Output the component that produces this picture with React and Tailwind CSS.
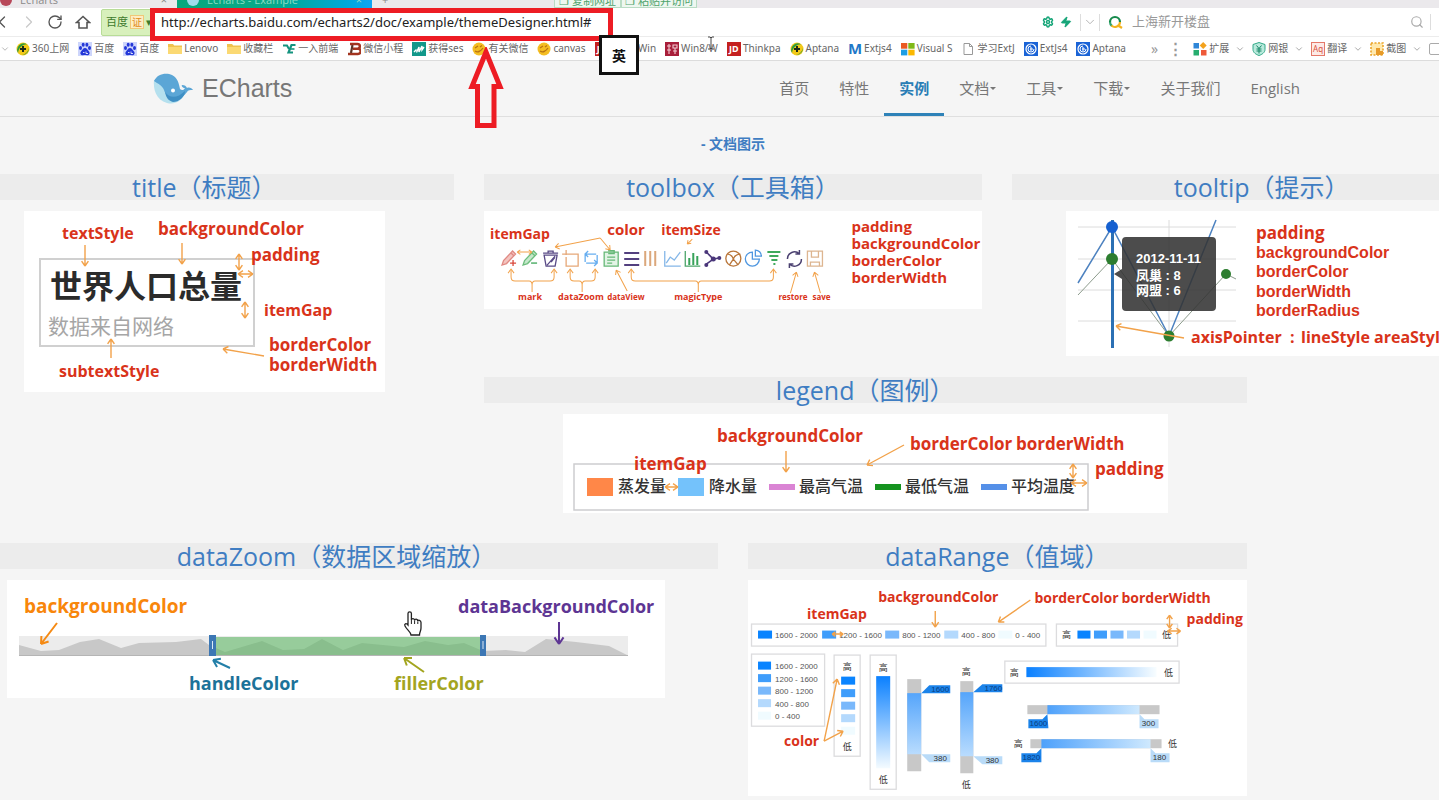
import { RotateCw, ChevronLeft, ChevronRight, ChevronDown, Search, Zap, Settings } from "lucide-react";

const RED = "#d9331a";
const ORANGE = "#f2a24a";
const SANS = "'Open Sans','Noto Sans CJK SC',sans-serif";
const ARIAL = "'Liberation Sans','Noto Sans CJK SC',sans-serif";

/* ---------- browser chrome ---------- */

function PlusDisc() {
  return (
    <svg viewBox="0 0 14 14" className="size-3.5 shrink-0">
      <circle cx="7" cy="7" r="6.5" fill="#f3c918" />
      <path d="M2 11a6.500 6.500 0 0 1 9-8.700C7 2.500 3 5 2 11z" fill="#2f9a3c" />
      <path d="M13 6c0 4-3 7-7 7 4-1 6-3.500 7-7z" fill="#2f9a3c" />
      <path d="M7 4v6M4 7h6" stroke="#1c2a17" strokeWidth="2" />
    </svg>
  );
}

function Paw() {
  return (
    <svg viewBox="0 0 14 14" className="size-3.5 shrink-0">
      <rect width="14" height="14" fill="#cdd5fb" />
      <g fill="#2438d8">
        <ellipse cx="2.500" cy="6" rx="1.500" ry="2" />
        <ellipse cx="5.200" cy="2.800" rx="1.500" ry="2" />
        <ellipse cx="8.900" cy="2.800" rx="1.500" ry="2" />
        <ellipse cx="11.500" cy="6" rx="1.500" ry="2" />
        <path d="M7 6c2 0 2.500 2 4 3.500 1.500 2 0 4-2 3.700-1.500-.3-2.500-.3-4 0-2 .3-3.500-1.700-2-3.700C4.500 8 5 6 7 6z" />
      </g>
      <path d="M5 10.500h1.500M8 9.500v2h2" stroke="#fff" strokeWidth=".8" fill="none" />
    </svg>
  );
}

function Folder() {
  return (
    <svg viewBox="0 0 14 14" className="size-3.5 shrink-0">
      <path d="M0 2h5l1.200 1.500H14V12H0z" fill="#f0c24e" />
      <path d="M0 5h14v7H0z" fill="#fbd973" />
    </svg>
  );
}

function Branch() {
  return (
    <svg viewBox="0 0 14 14" className="size-3.5 shrink-0">
      <path d="M1 3.500h4l2 3.500" stroke="#14937f" strokeWidth="2" fill="none" />
      <path d="M13.500 3H9.500L6.500 10.500H11" stroke="#14937f" strokeWidth="2.200" fill="none" />
      <path d="M8.500 7h4" stroke="#14937f" strokeWidth="1.600" />
    </svg>
  );
}

function Bee() {
  return (
    <svg viewBox="0 0 14 14" className="size-3.5 shrink-0">
      <path d="M3 2h7.500a2 2 0 0 1 0 4.700H6h5a2.500 2.500 0 0 1 0 5.300H1" stroke="#a3341f" strokeWidth="2.400" fill="none" />
      <path d="M5.500 3L4 11" stroke="#5d3526" strokeWidth="2.200" />
    </svg>
  );
}

function Wave() {
  return (
    <svg viewBox="0 0 14 14" className="size-3.5 shrink-0">
      <rect width="14" height="14" fill="#12988a" />
      <path d="M2 10l2.500-2.500M4.500 10.500L7 5v5l3-6v4l2-3" stroke="#fff" strokeWidth="1.400" fill="none" />
    </svg>
  );
}

function Coin() {
  return (
    <svg viewBox="0 0 14 14" className="size-3.5 shrink-0">
      <circle cx="7" cy="7" r="6.500" fill="#f4bd22" />
      <path d="M3 6l3-2M8 5l2-1.500M3 9c3 2 6 0 8-3" stroke="#b97412" strokeWidth="1.300" fill="none" />
    </svg>
  );
}

function Stamp() {
  return (
    <svg viewBox="0 0 14 14" className="size-3.5 shrink-0">
      <rect width="14" height="14" fill="#a81e3a" />
      <path d="M2 4h4M4 2v10M2 8h4M8 3h4v3H8zM8 9h4M10 6v6" stroke="#f2ccd2" strokeWidth="1.100" fill="none" />
    </svg>
  );
}

function Jd() {
  return (
    <span className="flex size-3.5 shrink-0 items-center justify-center bg-[#c4201f] text-[9px] font-bold text-white">JD</span>
  );
}

function Letter() {
  return <span className="flex size-3.5 shrink-0 items-center justify-center text-[15px] font-bold text-[#1f78c8]">M</span>;
}

function Windows() {
  return (
    <svg viewBox="0 0 14 14" className="size-3.5 shrink-0">
      <path d="M0 1h6.300v5.700H0z" fill="#ea5a23" />
      <path d="M7.300 1h6.300v5.700H7.300z" fill="#7fb916" />
      <path d="M0 7.700h6.300v5.700H0z" fill="#1c9ee4" />
      <path d="M7.300 7.700h6.300v5.700H7.300z" fill="#fbb800" />
    </svg>
  );
}

function Page() {
  return (
    <svg viewBox="0 0 14 14" className="size-3.5 shrink-0">
      <path d="M3 1.500h5.500L11.500 4.500V12.500H3zM8.500 1.500v3h3" stroke="#999" fill="none" />
    </svg>
  );
}

function Swirl() {
  return (
    <svg viewBox="0 0 14 14" className="size-3.5 shrink-0">
      <rect width="14" height="14" fill="#1a63d6" />
      <circle cx="7" cy="7" r="5" stroke="#fff" strokeWidth="1.200" fill="none" />
      <path d="M7 4a3 3 0 1 0 3 3M7 5v4M6 7h3" stroke="#fff" fill="none" />
    </svg>
  );
}

function Blocks() {
  return (
    <svg viewBox="0 0 14 14" className="size-3.5 shrink-0">
      <path d="M.5 1h5.500v5.500H.5z" fill="#2f86d8" />
      <path d="M10.200 0l3.500 3.500-3.500 3.500-3.500-3.500z" fill="#f3a21d" />
      <path d="M.5 8h5.500v5.500H.5z" fill="#27ad6f" />
      <path d="M8 8h5.500v5.500H8z" fill="#ee5a3a" />
    </svg>
  );
}

function Shield() {
  return (
    <svg viewBox="0 0 14 14" className="size-3.5 shrink-0">
      <path d="M7 .5l6 2v5c0 3-3 5-6 6-3-1-6-3-6-6v-5z" fill="#b9eadc" stroke="#31a888" />
      <path d="M4.500 3.500L7 6.500l2.500-3M4.500 7h5M4.500 9h5M7 6.500v5" stroke="#148465" fill="none" />
    </svg>
  );
}

function Dictionary() {
  return (
    <span className="flex size-3.5 shrink-0 items-center justify-center border border-[#e4796a] bg-[#fdeae6] text-[8px] text-[#d9513e]">Aq</span>
  );
}

function Snip() {
  return (
    <svg viewBox="0 0 14 14" className="size-3.5 shrink-0">
      <rect x="1" y="1" width="12" height="12" fill="#ffe9ae" stroke="#eba52c" strokeWidth="1.600" strokeDasharray="2 1.500" />
      <path d="M6 6h4v3h3v4H6z" fill="#e79a28" />
    </svg>
  );
}

function Home() {
  return (
    <svg viewBox="0 0 16 16" className="size-4" aria-hidden="true">
      <path d="M1.500 8.500L8 2.500l6.500 6H12V14H4V8.500z" stroke="currentColor" strokeWidth="1.600" fill="none" />
    </svg>
  );
}

const bookmarks = [
  [PlusDisc, "360上网"],
  [Paw, "百度"],
  [Paw, "百度"],
  [Folder, "Lenovo"],
  [Folder, "收藏栏"],
  [Branch, "一入前端"],
  [Bee, "微信小程"],
  [Wave, "获得ses"],
  [Coin, "有关微信"],
  [Coin, "canvas"],
  [Jd, "Win8/Win"],
  [Stamp, "Win8/W"],
  [Jd, "Thinkpa"],
  [PlusDisc, "Aptana"],
  [Letter, "Extjs4"],
  [Windows, "Visual S"],
  [Page, "学习ExtJ"],
  [Swirl, "ExtJs4"],
  [Swirl, "Aptana"],
];

const extensions = [
  [Blocks, "扩展"],
  [Shield, "网银"],
  [Dictionary, "翻译"],
  [Snip, "截图"],
];

function TabStrip() {
  return (
    <div className="flex h-2 items-end overflow-hidden bg-[#ebe9ec] text-[11px] leading-3 text-[#8a8a8a]">
      <div className="flex w-[177px] shrink-0 items-center gap-2 pr-2.5 pb-0.5">
        <span className="size-3 rounded-full bg-[#b8485a]" />
        <span className="flex-1">Echarts</span>
        <span>×</span>
      </div>
      <div className="flex w-[195px] shrink-0 items-center gap-2 bg-linear-to-r from-[#08a77c] via-[#08a98a] to-[#0fa5f5] px-2.5 pb-0.5 text-[#8fdcc4]">
        <span className="size-3 rounded-full bg-[#9fdcec]" />
        <span className="flex-1">Echarts - Example</span>
        <span>×</span>
      </div>
      <div className="w-[182px] shrink-0 pb-0.5 pl-2.5">+</div>
      <button className="flex w-[67px] items-center justify-center border border-[#b9dcc4] bg-[#eef7f0] text-[#4fa36c]">❐ 复制网址</button>
      <button className="flex w-[76px] items-center justify-center border border-[#b9dcc4] bg-[#eef7f0] text-[#4fa36c]">❐ 粘贴并访问</button>
    </div>
  );
}

function AddressBar() {
  return (
    <div className="flex h-[29px] items-center border-b border-[#ececec] bg-white text-[#555]">
      <button aria-label="Back" className="-ml-2"><ChevronLeft className="size-5" strokeWidth={1.5} /></button>
      <button aria-label="Forward" className="ml-[7px] text-[#c9c9c9]"><ChevronRight className="size-5" strokeWidth={1.5} /></button>
      <button aria-label="Reload" className="ml-2"><RotateCw className="size-4" /></button>
      <button aria-label="Home" className="ml-3"><Home /></button>
      <button className="ml-2.5 flex h-[27px] w-[52px] items-center gap-0.5 rounded-xs border border-[#b8dc98] bg-[#d8f0bc] pl-1 text-[11px] whitespace-nowrap text-[#3f7a2c]">
        百度<span className="border border-[#f0c878] bg-[#fdedc4] px-px text-[10px] leading-3 text-[#e08a20]">证</span>▾
      </button>
      <input
        aria-label="Address"
        defaultValue="http://echarts.baidu.com/echarts2/doc/example/themeDesigner.html#"
        className="ml-2 h-6 min-w-0 flex-1 bg-white font-['Noto_Sans',sans-serif] text-[13px] text-[#222] outline-none"
      />
      <div className="flex items-center gap-1.5 text-[#16a578]">
        <Settings className="size-3" strokeWidth={3} />
        <Zap className="size-3" fill="currentColor" />
      </div>
      <button aria-label="Address list" className="mx-2 flex h-[17px] items-center border-x border-[#ddd] px-0.5 text-[#aaa]">
        <ChevronDown className="size-3.5" strokeWidth={1.5} />
      </button>
      <svg viewBox="0 0 16 14" className="h-3.5 w-4" aria-hidden="true">
        <path d="M2 7a5 5 0 0 1 10 0" stroke="#168a4c" strokeWidth="2.200" fill="none" />
        <path d="M2 7a5 5 0 0 0 2 4" stroke="#2fa36a" strokeWidth="2.200" fill="none" />
        <path d="M3.500 10.500A5 5 0 0 0 12 7M11 11l3 2" stroke="#f3b31f" strokeWidth="2.200" fill="none" />
      </svg>
      <input aria-label="Search" placeholder="上海新开楼盘" className="ml-2 w-[278px] text-[13px] outline-none placeholder:text-[#999]" />
      <button aria-label="Search the web" className="mr-1.5 text-[#aaa]"><Search className="size-3.5" /></button>
      <span className="mr-2 h-4 border-l border-[#ddd]" />
    </div>
  );
}

function BookmarkBar() {
  return (
    <nav aria-label="Bookmarks" className="flex h-6 items-center overflow-hidden border-b border-[#dcdcdc] bg-white font-['Noto_Sans','Noto_Sans_CJK_SC',sans-serif] text-[10px] whitespace-nowrap text-[#666]">
      <ChevronDown className="size-2.5 shrink-0 text-[#aaa]" />
      <ul className="ml-1.5 flex gap-[9px]">
        {bookmarks.map(([Icon, label], i) => (
          <li key={i}>
            <a href="#" className="flex items-center gap-0.5">
              <Icon />
              {label}
            </a>
          </li>
        ))}
      </ul>
      <div className="ml-auto flex w-[288px] shrink-0 items-center gap-2.5">
        <button aria-label="More bookmarks" className="text-[14px] text-[#999]">»</button>
        <span className="text-[15px] font-bold text-[#999]">⋮</span>
        <div className="flex items-center gap-[7px]">
          {extensions.map(([Icon, label]) => (
            <button key={label} className="flex items-center gap-0.5">
              <Icon />
              {label}
              <ChevronDown className="ml-1 size-2.5 text-[#999]" />
            </button>
          ))}
          <span className="size-3 shrink-0 rounded-xs border border-[#aaa]" />
        </div>
      </div>
    </nav>
  );
}

/* ---------- site header ---------- */

function Whale() {
  return (
    <svg viewBox="0 0 42 32" className="h-8 w-[42px]" aria-hidden="true">
      <path d="M1 7c-1 9 2 20 13 23 8 2 14-2 18-9z" fill="#b5e0ee" />
      <path d="M1 8C4 1 13-1 19 2c6 3 7 9 8 14 2 2 4 1 5-1-2 0-4-2-3-3 3 0 4 1 5 3 2-1 5 0 6 2-3 0-5 0-6 2-3 4-7 7-12 6-6 0-10-4-11-8-2-5-6-6-10-9z" fill="#5ba6d6" />
      <path d="M12 19c4 6 12 7 20-1 0 6-6 11-12 11-4-1-7-4-8-10z" fill="#3f8fc4" />
      <circle cx="20" cy="17.500" r="2" fill="#fff" />
    </svg>
  );
}

const navItems = [
  { label: "首页" },
  { label: "特性" },
  { label: "实例", active: true },
  { label: "文档", menu: true },
  { label: "工具", menu: true },
  { label: "下载", menu: true },
  { label: "关于我们" },
  { label: "English" },
];

function SiteHeader() {
  return (
    <header className="flex h-14 items-stretch justify-between border-b border-[#dfdfdf] pr-[124px] pl-[153px]">
      <a href="#" className="flex items-center gap-[7px] text-[25px] text-[#777]" style={{ fontFamily: ARIAL }}>
        <Whale />
        ECharts
      </a>
      <nav aria-label="Main" className="flex text-[15px] text-[#777]">
        {navItems.map(({ label, active, menu }) => (
          <a
            key={label}
            href="#"
            className={
              active
                ? "flex items-center border-b-3 border-[#2e82b8] px-[15px] pt-[3px] font-bold text-[#2a7db5]"
                : "flex items-center gap-px px-[15px]"
            }
          >
            {label}
            {menu && <span className="border-x-3 border-t-3 border-x-transparent border-t-[#777]" />}
          </a>
        ))}
      </nav>
    </header>
  );
}

/* ---------- diagram helpers ---------- */

function Arrow({ from, to, both = false, color = ORANGE, width = 1.4, head = 6 }) {
  const [x1, y1] = from;
  const [x2, y2] = to;
  const tip = (x, y, angle) =>
    [0.6, -0.6].map((s) => `M${x} ${y}L${x - head * Math.cos(angle + s)} ${y - head * Math.sin(angle + s)}`).join("");
  const a = Math.atan2(y2 - y1, x2 - x1);
  const d = `M${x1} ${y1}L${x2} ${y2}${tip(x2, y2, a)}${both ? tip(x1, y1, a + Math.PI) : ""}`;
  return <path d={d} stroke={color} strokeWidth={width} fill="none" />;
}

function Note({ x, y, size = 17, color = RED, children }) {
  return (
    <text x={x} y={y} fontSize={size} fill={color} fontWeight="700">
      {children}
    </text>
  );
}

function Section({ heading, className, children }) {
  return (
    <section className={className}>
      <h2 className="bg-[#ececec] text-center text-[25px] leading-[26px] text-[#3f7dc2]">{heading}</h2>
      <div className="mt-[11px] flex justify-center">{children}</div>
    </section>
  );
}

/* ---------- diagrams ---------- */

function TitleDiagram() {
  return (
    <svg viewBox="24 211 361 181" className="w-[361px] bg-white" fontFamily={SANS} role="img" aria-label="title">
      <rect x="40" y="259" width="214" height="87" fill="none" stroke="#d0d0d0" strokeWidth="2" />
      <text x="50" y="298" fontSize="32" fontWeight="700" fill="#2b2b2b">世界人口总量</text>
      <text x="48" y="334" fontSize="21" fill="#a6a6a6">数据来自网络</text>
      <Arrow from={[85, 245]} to={[85, 266]} />
      <Arrow from={[182, 243]} to={[182, 264]} />
      <Arrow from={[239, 254]} to={[239, 270]} both />
      <Arrow from={[238, 274]} to={[253, 274]} both />
      <Arrow from={[245, 302]} to={[245, 318]} both />
      <Arrow from={[111, 358]} to={[111, 339]} />
      <Arrow from={[264, 356]} to={[223, 349]} />
      <Note x={62} y={239} size={16}>textStyle</Note>
      <Note x={158} y={235}>backgroundColor</Note>
      <Note x={251} y={261}>padding</Note>
      <Note x={264} y={316} size={16}>itemGap</Note>
      <Note x={269} y={351}>borderColor</Note>
      <Note x={269} y={371}>borderWidth</Note>
      <Note x={59} y={377} size={16}>subtextStyle</Note>
    </svg>
  );
}

function Bracket({ left, right, stem }) {
  return (
    <g fill="none" stroke={ORANGE} strokeWidth="1">
      <path d={`M${left} 270V277q0 4 4 4H${stem - 3}q3 0 3 4V292V285q0-4 3-4H${right - 4}q4 0 4-4V270`} />
      <path d={`M${left - 3} 273l3-4 3 4M${right - 3} 273l3-4 3 4`} />
    </g>
  );
}

function ToolboxDiagram() {
  return (
    <svg viewBox="484 211 498 98" className="w-full bg-white" fontFamily={SANS} role="img" aria-label="toolbox">
      <g fill="none" strokeWidth="1.300">
        <g stroke="#e08a84">
          <path d="M502 265l1.500-4.500 9-9.500 3 3-9 9.500zM511 253l3 3" fill="#f3c4bf" />
          <path d="M510 263h6M513 260v6" stroke="#d9483b" />
        </g>
        <g stroke="#6dbd7d">
          <path d="M523 265l1.500-4.500 9-9.500 3 3-9 9.500zM532 253l3 3" fill="#c5e8cb" />
          <path d="M531 263h6" stroke="#3ba556" />
        </g>
        <path d="M543 253h15M548 253v-2h5v2M544 255l2 11h9l2-11zM547 265l8-9M551 262l4-5" stroke="#594a86" />
        <path d="M568 254h10v12h-12v-9M562 254h6M566 250v5" stroke="#e6a878" />
        <path d="M585 262v-8h11M588 251l-3 3 3 3M597 255v8h-11M594 260l3 3-3 3" stroke="#67aef0" />
        <path d="M604 252h14v14h-14zM608 250.500h6v3h-6M607 257h8M607 260h8M607 263h5" stroke="#66b877" fill="#e3f4e6" />
        <path d="M624 253h15M624 259h15M624 265h15" stroke="#53407f" strokeWidth="2" />
        <path d="M645 251v15M650 251v15M655 251v15" stroke="#dba77b" strokeWidth="2" />
        <path d="M664.500 251v15h16M666 263l4-6 4 3 6-8" stroke="#85b7e8" />
        <path d="M685 251v15h15" stroke="#4ca56a" />
        <path d="M689 258v7M693 253v12M697 256v9" stroke="#38a35a" strokeWidth="2" />
        <path d="M706 252l7 7M713 259l-7 5M713 259l6-1" stroke="#4a367a" strokeWidth="1.600" />
        <g fill="#4a367a">
          <circle cx="706" cy="252" r="2" /><circle cx="706" cy="265" r="2" /><circle cx="713" cy="259" r="2.500" /><circle cx="719" cy="258" r="2" />
        </g>
        <circle cx="733" cy="258.500" r="7.500" stroke="#b9763a" />
        <path d="M727 254c3 0 5 2 6 5 1-3 3-5 7-5M733 259l-4 6M733 259l5 6" stroke="#b9763a" />
        <path d="M752 252a7 7 0 1 0 7 7h-7z" stroke="#4f97e0" />
        <path d="M755 250a6 6 0 0 1 6 6h-6z" stroke="#4f97e0" />
        <path d="M767 252h13M769 256h9M771 260h6M773 264h2" stroke="#3fa95c" strokeWidth="2" />
        <path d="M787 259a7 7 0 0 1 12-5M801 259a7 7 0 0 1-12 5M799 250v4h-4M789 268v-4h4" stroke="#4a4070" strokeWidth="1.500" />
        <path d="M807 251h15v15h-15zM811 251v6h7v-6M810 266v-4h9v4" stroke="#ddb590" />
      </g>
      <Arrow from={[517, 252]} to={[532, 252]} both width={1} head={4} />
      <Arrow from={[600, 238]} to={[555, 247]} width={1} head={5} />
      <Arrow from={[600, 238]} to={[610, 250]} width={1} head={5} />
      <Arrow from={[692, 239]} to={[687, 244]} width={1} head={4} />
      <Bracket left={511} right={554} stem={532} />
      <Bracket left={570} right={595} stem={582} />
      <Bracket left={631} right={773} stem={698} />
      <Arrow from={[627, 291]} to={[616, 270]} width={1} head={5} />
      <Arrow from={[790, 293]} to={[796, 272]} width={1} head={5} />
      <Arrow from={[820, 293]} to={[814, 272]} width={1} head={5} />
      <Note x={490} y={239} size={14}>itemGap</Note>
      <Note x={607} y={235} size={15}>color</Note>
      <Note x={661} y={235} size={14}>itemSize</Note>
      <Note x={518} y={300} size={9}>mark</Note>
      <Note x={558} y={300} size={9}>dataZoom</Note>
      <Note x={607} y={300} size={8}>dataView</Note>
      <Note x={674} y={300} size={9}>magicType</Note>
      <Note x={778} y={300} size={8}>restore</Note>
      <Note x={812} y={300} size={8}>save</Note>
      <Note x={851} y={232} size={15}>padding</Note>
      <Note x={851} y={249} size={15}>backgroundColor</Note>
      <Note x={851} y={266} size={15}>borderColor</Note>
      <Note x={851} y={283} size={15}>borderWidth</Note>
    </svg>
  );
}

function TooltipDiagram() {
  return (
    <svg viewBox="1066 211 392 145" className="w-[392px] bg-white" fontFamily={SANS} role="img" aria-label="tooltip">
      <path d="M1078 227h158M1078 259h158M1078 290h158M1078 321h158M1169 220v127" stroke="#dcdcdc" fill="none" />
      <path d="M1078 295L1112 259 1169 336 1226 274 1236 279" stroke="#8d9c8d" fill="none" />
      <path d="M1078 283L1112 227 1169 336 1216 220" stroke="#4d82c0" strokeWidth="1.500" fill="none" />
      <path d="M1112.500 220V348" stroke="#2b70b4" strokeWidth="3" />
      <circle cx="1112" cy="227" r="6" fill="#1560d0" />
      <g fill="#2c7d2f">
        <circle cx="1112" cy="259" r="6" />
        <circle cx="1169" cy="336" r="5.500" />
        <circle cx="1226" cy="274" r="5" />
      </g>
      <path d="M1126 237h86q4 0 4 4v66q0 4-4 4h-86q-4 0-4-4v-28l-8-5 8-5v-28q0-4 4-4z" fill="#333" fillOpacity=".88" />
      <g fontFamily={ARIAL} fontSize="13" fontWeight="700" fill="#fff">
        <text x="1136" y="263">2012-11-11</text>
        <text x="1136" y="280">凤巢 : 8</text>
        <text x="1136" y="295">网盟 : 6</text>
      </g>
      <Arrow from={[1184, 338]} to={[1116, 326]} />
      <Note x={1256} y={239}>padding</Note>
      <g fontFamily={ARIAL}>
        <Note x={1256} y={258} size={16}>backgroundColor</Note>
        <Note x={1256} y={277} size={16}>borderColor</Note>
        <Note x={1256} y={297} size={16}>borderWidth</Note>
        <Note x={1256} y={316} size={16}>borderRadius</Note>
      </g>
      <Note x={1191} y={343} size={16}>axisPointer</Note>
      <Note x={1290} y={343} size={16}>:</Note>
      <Note x={1301} y={343} size={16}>lineStyle</Note>
      <Note x={1374} y={343} size={16}>areaStyle</Note>
    </svg>
  );
}

function LegendDiagram() {
  return (
    <svg viewBox="563 414 605 99" className="w-[605px] bg-white" fontFamily={SANS} role="img" aria-label="legend">
      <rect x="574" y="464" width="514" height="46" fill="none" stroke="#cdcdcf" strokeWidth="1.500" />
      <rect x="587" y="478" width="26" height="18" fill="#ff8748" />
      <rect x="678" y="478" width="26" height="18" fill="#74c2fb" />
      <rect x="769" y="484" width="26" height="6" fill="#da84d4" />
      <rect x="875" y="484" width="26" height="6" fill="#15931f" />
      <rect x="981" y="484" width="26" height="6" fill="#5590e8" />
      <g fontSize="16" fill="#333" fontWeight="500">
        <text x="618" y="492">蒸发量</text>
        <text x="709" y="492">降水量</text>
        <text x="799" y="492">最高气温</text>
        <text x="905" y="492">最低气温</text>
        <text x="1011" y="492">平均温度</text>
      </g>
      <Arrow from={[786, 451]} to={[786, 472]} />
      <Arrow from={[904, 445]} to={[867, 465]} />
      <Arrow from={[1073, 464]} to={[1073, 478]} both />
      <Arrow from={[1071, 483]} to={[1087, 483]} both />
      <Arrow from={[665, 487]} to={[678, 487]} both />
      <Note x={717} y={442}>backgroundColor</Note>
      <Note x={910} y={450}>borderColor</Note>
      <Note x={1016} y={450}>borderWidth</Note>
      <Note x={634} y={470}>itemGap</Note>
      <Note x={1095} y={475}>padding</Note>
    </svg>
  );
}

const shadow =
  "20,645 42,651 60,650 81,642 100,639 122,648 140,643 177,642 202,639 210,645 226,652 263,641 284,650 305,649 323,639 344,650 363,643 405,647 426,641 449,645 465,643 484,651 507,650 526,652 547,639 577,642 610,646 628,655 20,655";

function DataZoomDiagram() {
  return (
    <svg viewBox="8 580 658 118" className="w-[658px] bg-white" fontFamily={SANS} role="img" aria-label="dataZoom">
      <rect x="20" y="636" width="609" height="20" fill="#ececec" />
      <polygon points={shadow} fill="#c8c8c8" />
      <path d="M20 655.500H629" stroke="#b5b5b5" />
      <rect x="217" y="637" width="264" height="18" fill="#5fb765" fillOpacity=".6" />
      <rect x="210" y="635" width="7" height="21" fill="#3c77b4" />
      <rect x="481" y="635" width="6" height="21" fill="#3c77b4" />
      <path d="M213.500 641v8M484 641v8" stroke="#dbe8f5" />
      <Arrow from={[58, 623]} to={[42, 644]} color="#f58a14" width={2} head={8} />
      <Arrow from={[231, 668]} to={[214, 660]} color="#237fa8" width={2} head={8} />
      <Arrow from={[425, 672]} to={[405, 658]} color="#a3a51f" width={2} head={8} />
      <Arrow from={[560, 622]} to={[560, 644]} color="#5d3593" width={2} head={8} />
      <Note x={25} y={613} size={19} color="#f8860b">backgroundColor</Note>
      <Note x={459} y={613} size={18} color="#5d3593">dataBackgroundColor</Note>
      <Note x={190} y={690} size={18} color="#1c7299">handleColor</Note>
      <Note x={395} y={690} size={18} color="#a3a51f">fillerColor</Note>
    </svg>
  );
}

const ranges = [
  { label: "1600 - 2000", color: "#0a84ff", x: 759 },
  { label: "1200 - 1600", color: "#3f9dfb", x: 823 },
  { label: "800 - 1200", color: "#79b8fb", x: 886 },
  { label: "400 - 800", color: "#b4d9fd", x: 945 },
  { label: "0 - 400", color: "#f0fbff", x: 999 },
];

function DataRangeDiagram() {
  return (
    <svg viewBox="749 580 498 216" className="w-full bg-white" fontFamily={SANS} role="img" aria-label="dataRange">
      <defs>
        <linearGradient id="fullDown" x2="0" y2="1"><stop stopColor="#0a80ff" /><stop offset="1" stopColor="#f4fbff" /></linearGradient>
        <linearGradient id="partDown" x2="0" y2="1"><stop stopColor="#55a5fb" /><stop offset="1" stopColor="#b9dcfe" /></linearGradient>
        <linearGradient id="fullAcross"><stop stopColor="#0a80ff" /><stop offset="1" stopColor="#f8fdff" /></linearGradient>
        <linearGradient id="partAcross"><stop stopColor="#4ea1fb" /><stop offset="1" stopColor="#cfe9fe" /></linearGradient>
      </defs>
      <g fill="none" stroke="#dcdcde" strokeWidth="1.300">
        <rect x="752.500" y="624" width="294" height="22" />
        <rect x="1057" y="624" width="121" height="22" />
        <rect x="752.500" y="654" width="73" height="72" />
        <rect x="835" y="655" width="26" height="101" />
        <rect x="871" y="655" width="26" height="134" />
        <rect x="1005.500" y="661" width="174" height="22" />
      </g>
      {ranges.map(({ label, color, x }, i) => (
        <g key={label} fill={color}>
          <rect x={x} y="630.500" width="14" height="8" />
          <rect x={1078 + i * 16.5} y="630.500" width="13" height="8" />
          <rect x="759" y={661.5 + i * 12.5} width="13" height="8" />
          <rect x="842" y={676.5 + i * 12.5} width="14" height="8" />
          <g fontFamily={ARIAL} fontSize="8" fill="#555">
            <text x={x + 17} y="638">{label}</text>
            <text x="776" y={669 + i * 12.5}>{label}</text>
          </g>
        </g>
      ))}
      <rect x="877" y="676" width="14" height="92" fill="url(#fullDown)" />
      <rect x="1027" y="667" width="130" height="10" fill="url(#fullAcross)" />
      <g fill="#c8c8c8">
        <rect x="908" y="679" width="14" height="92" />
        <rect x="961" y="681" width="13" height="92" />
        <rect x="1028" y="705" width="132" height="9" />
        <rect x="1031" y="739" width="131" height="9" />
      </g>
      <rect x="908" y="693" width="14" height="61" fill="url(#partDown)" />
      <rect x="961" y="692" width="13" height="64" fill="url(#partDown)" />
      <rect x="1048" y="705" width="92" height="9" fill="url(#partAcross)" />
      <rect x="1042" y="739" width="109" height="9" fill="url(#partAcross)" />
      <g fill="#1b83ea">
        <polygon points="922,693 930,685 951,685 951,693" />
        <polygon points="974,692 983,684 1003,684 1003,692" />
        <polygon points="1048,714 1049,728 1029,728 1029,719 1043,719" />
        <polygon points="1042,748 1042,762 1022,762 1022,753 1037,753" />
      </g>
      <g fill="#b9dbf8">
        <polygon points="922,754 951,754 951,762 930,762" />
        <polygon points="974,756 1003,756 1003,764 983,764" />
        <polygon points="1140,714 1145,719 1159,719 1159,728 1140,728" />
        <polygon points="1151,748 1156,753 1170,753 1170,762 1151,762" />
      </g>
      <g fontFamily={ARIAL} fontSize="8" textAnchor="middle" fill="#333">
        <g fill="#0b3f80">
          <text x="941" y="692">1600</text>
          <text x="994" y="691">1760</text>
          <text x="1039" y="726">1600</text>
          <text x="1032" y="760">1820</text>
        </g>
        <text x="941" y="761">380</text>
        <text x="993" y="763">380</text>
        <text x="1149" y="726">300</text>
        <text x="1160" y="760">180</text>
      </g>
      <g fontSize="9" textAnchor="middle" fill="#333">
        <text x="1067" y="638">高</text>
        <text x="1167" y="638">低</text>
        <text x="848" y="670">高</text>
        <text x="848" y="750">低</text>
        <text x="884" y="671">高</text>
        <text x="884" y="783">低</text>
        <text x="967" y="675">高</text>
        <text x="967" y="788">低</text>
        <text x="1015" y="676">高</text>
        <text x="1169" y="676">低</text>
        <text x="1019" y="747">高</text>
        <text x="1173" y="747">低</text>
      </g>
      <Arrow from={[936, 611]} to={[936, 627]} />
      <Arrow from={[1031, 600]} to={[999, 622]} />
      <Arrow from={[1170, 615]} to={[1170, 628]} both head={5} />
      <Arrow from={[1168, 631]} to={[1181, 631]} both head={5} />
      <Arrow from={[833, 634]} to={[844, 634]} both head={4} />
      <Arrow from={[825, 741]} to={[838, 679]} />
      <Arrow from={[825, 741]} to={[844, 731]} />
      <Note x={808} y={619} size={14}>itemGap</Note>
      <Note x={879} y={602} size={14}>backgroundColor</Note>
      <Note x={1035} y={603} size={14}>borderColor</Note>
      <Note x={1122} y={603} size={14}>borderWidth</Note>
      <Note x={1187} y={624} size={14}>padding</Note>
      <Note x={785} y={746} size={14}>color</Note>
    </svg>
  );
}

/* ---------- overlays ---------- */

function Overlays() {
  return (
    <>
      <div className="pointer-events-none absolute top-2 left-[150px] h-[33px] w-[463px] border-5 border-[#ed1c24]" />
      <svg viewBox="0 0 36 82" className="absolute top-[47px] left-[468px] h-[82px] w-9" aria-hidden="true">
        <path d="M18 5L4 39.500h5.500V78.500H26V39.500H32z" fill="none" stroke="#ed1c24" strokeWidth="5" />
      </svg>
      <div className="absolute top-[35px] left-[599px] flex size-10 items-center justify-center border-3 border-[#111] bg-white text-[14px] font-bold text-[#111]">
        英
      </div>
      <svg viewBox="0 0 8 14" className="absolute top-9 left-[707px] h-3.5 w-2" aria-hidden="true">
        <path d="M1 1h2l1 1 1-1h2M4 2v10M1 13h2l1-1 1 1h2" stroke="#444" fill="none" />
      </svg>
      <svg viewBox="0 0 20 25" className="absolute top-[611px] left-[403px] h-[25px] w-5" aria-hidden="true">
        <path
          d="M5 14V2.500a1.700 1.700 0 0 1 3.400 0V9c0-2 3.200-2 3.200.5 0-2 3.200-1.700 3.200.8 0-1.800 3.200-1.300 3.200 1.200V17c0 3-1.500 4-1.500 7H8c0-3-4-5-6-9-1-2 1-3.500 3-1z"
          fill="#fff"
          stroke="#222"
          strokeWidth="1.300"
        />
        <path d="M8.400 9v4M11.600 9.500V13M14.800 10.500V13" stroke="#222" />
      </svg>
    </>
  );
}

export default function App() {
  return (
    <div className="relative min-h-screen overflow-hidden bg-[#f5f5f5] font-['Open_Sans','Noto_Sans_CJK_SC',sans-serif]">
      <TabStrip />
      <AddressBar />
      <BookmarkBar />
      <SiteHeader />
      <main className="-mr-[72px] -ml-[45px]">
        <h1 className="flex h-[57px] items-center justify-center pb-1 text-[14px] font-bold text-[#3f7dc2]">- 文档图示</h1>
        <div className="grid grid-cols-12 items-start gap-x-[30px] gap-y-[21px]">
          <Section heading="title（标题）" className="col-span-4 row-span-2"><TitleDiagram /></Section>
          <Section heading="toolbox（工具箱）" className="col-span-4"><ToolboxDiagram /></Section>
          <Section heading="tooltip（提示）" className="col-span-4"><TooltipDiagram /></Section>
          <Section heading="legend（图例）" className="col-span-6 pb-[9px]"><LegendDiagram /></Section>
          <Section heading="dataZoom（数据区域缩放）" className="col-span-6"><DataZoomDiagram /></Section>
          <Section heading="dataRange（值域）" className="col-span-4"><DataRangeDiagram /></Section>
        </div>
      </main>
      <Overlays />
    </div>
  );
}
